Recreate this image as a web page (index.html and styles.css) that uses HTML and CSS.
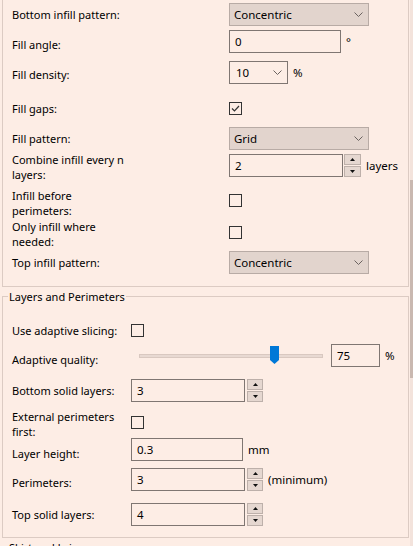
FILE: index.html
```html
<!DOCTYPE html>
<html lang="en">
<head>
  <meta charset="UTF-8" />
  <title>Print Settings</title>
  <link rel="stylesheet" href="styles.css">
</head>
<body>
  <div class="window">
    <div class="panel">

      <fieldset class="group cut">
        <div class="grid infill">
          <div class="lbl">Bottom infill pattern:</div>
          <div class="ctl">
            <div class="combo wide"><span>Concentric</span><svg class="chev" width="9" height="5" viewBox="0 0 9 5"><polyline points="0.5,0.5 4.5,4.5 8.5,0.5" /></svg></div>
          </div>

          <div class="lbl low">Fill angle:</div>
          <div class="ctl">
            <div class="field w112">0</div><span class="unit">°</span>
          </div>

          <div class="lbl low">Fill density:</div>
          <div class="ctl">
            <div class="combo small"><span>10</span><svg class="chev" width="9" height="5" viewBox="0 0 9 5"><polyline points="0.5,0.5 4.5,4.5 8.5,0.5" /></svg></div><span class="unit">%</span>
          </div>

          <div class="lbl">Fill gaps:</div>
          <div class="ctl">
            <div class="check"><svg width="11" height="11" viewBox="0 0 11 11"><polyline points="2,5.5 4.5,8 9,3" /></svg></div>
          </div>

          <div class="lbl">Fill pattern:</div>
          <div class="ctl">
            <div class="combo wide"><span>Grid</span><svg class="chev" width="9" height="5" viewBox="0 0 9 5"><polyline points="0.5,0.5 4.5,4.5 8.5,0.5" /></svg></div>
          </div>

          <div class="lbl two">Combine infill every n<br>layers:</div>
          <div class="ctl">
            <div class="field w114">2</div>
            <div class="spin tight">
              <div class="arrow"><svg width="5" height="3" viewBox="0 0 5 3"><polygon points="0,3 2.5,0 5,3" /></svg></div>
              <div class="arrow"><svg width="5" height="3" viewBox="0 0 5 3"><polygon points="0,0 5,0 2.5,3" /></svg></div>
            </div>
            <span class="unit">layers</span>
          </div>

          <div class="lbl two">Infill before<br>perimeters:</div>
          <div class="ctl"><div class="check"></div></div>

          <div class="lbl two">Only infill where<br>needed:</div>
          <div class="ctl"><div class="check"></div></div>

          <div class="lbl">Top infill pattern:</div>
          <div class="ctl">
            <div class="combo wide"><span>Concentric</span><svg class="chev" width="9" height="5" viewBox="0 0 9 5"><polyline points="0.5,0.5 4.5,4.5 8.5,0.5" /></svg></div>
          </div>
        </div>
      </fieldset>

      <fieldset class="group">
        <legend>Layers and Perimeters</legend>
        <div class="grid layers">
          <div class="lbl">Use adaptive slicing:</div>
          <div class="ctl"><div class="check"></div></div>

          <div class="lbl lower">Adaptive quality:</div>
          <div class="ctl">
            <div class="slider">
              <div class="track"></div>
              <svg class="knob" width="9" height="18" viewBox="0 0 9 18"><polygon points="0,0 9,0 9,14 4.5,18 0,14" /></svg>
            </div>
            <div class="field w49">75</div><span class="unit">%</span>
          </div>

          <div class="lbl">Bottom solid layers:</div>
          <div class="ctl">
            <div class="field w114">3</div>
            <div class="spin">
              <div class="arrow"><svg width="5" height="3" viewBox="0 0 5 3"><polygon points="0,3 2.5,0 5,3" /></svg></div>
              <div class="arrow"><svg width="5" height="3" viewBox="0 0 5 3"><polygon points="0,0 5,0 2.5,3" /></svg></div>
            </div>
          </div>

          <div class="lbl two">External perimeters<br>first:</div>
          <div class="ctl"><div class="check"></div></div>

          <div class="lbl lower">Layer height:</div>
          <div class="ctl">
            <div class="field w112">0.3</div><span class="unit">mm</span>
          </div>

          <div class="lbl low">Perimeters:</div>
          <div class="ctl">
            <div class="field w114">3</div>
            <div class="spin">
              <div class="arrow"><svg width="5" height="3" viewBox="0 0 5 3"><polygon points="0,3 2.5,0 5,3" /></svg></div>
              <div class="arrow"><svg width="5" height="3" viewBox="0 0 5 3"><polygon points="0,0 5,0 2.5,3" /></svg></div>
            </div>
            <span class="unit">(minimum)</span>
          </div>

          <div class="lbl">Top solid layers:</div>
          <div class="ctl">
            <div class="field w114">4</div>
            <div class="spin">
              <div class="arrow"><svg width="5" height="3" viewBox="0 0 5 3"><polygon points="0,3 2.5,0 5,3" /></svg></div>
              <div class="arrow"><svg width="5" height="3" viewBox="0 0 5 3"><polygon points="0,0 5,0 2.5,3" /></svg></div>
            </div>
          </div>
        </div>
      </fieldset>

      <fieldset class="group">
        <legend>Skirt and brim</legend>
      </fieldset>

    </div>
    <div class="scrollbar"><div class="thumb"></div></div>
  </div>
</body>
</html>
```

FILE: styles.css
```css
html, body {
  margin: 0;
  height: 100%;
  overflow: hidden;
}
body {
  font-family: "Noto Sans", "Open Sans", sans-serif;
  font-size: 11px;
  line-height: 15px;
  color: #000;
  background: #fdede5;
}
.window {
  display: flex;
  height: 546px;
}
.panel {
  width: 410px;
}
.scrollbar {
  width: 3px;
  background: #f3e3dc;
}
.thumb {
  margin-top: 180px;
  height: 198px;
  background: #c9b8b0;
}

/* group boxes */
.group {
  margin: 2px 1px 0 2px;
  padding: 13px 0 1px 9px;
  border: 1px solid #dccbc3;
  min-width: 0;
}
.group.cut {
  margin-top: 0;
  padding-top: 0;
  padding-bottom: 5px;
  border-top: none;
}
.group legend {
  margin-left: -4px;
  padding: 0 1px;
}

/* label / control grid */
.grid {
  display: grid;
}
.grid.infill {
  grid-template-columns: 217px 1fr;
  grid-template-rows: 29px 25px 36px 36px 24px 30px 41px 22px 38px;
}
.grid.layers {
  grid-template-columns: 119px 1fr;
  grid-template-rows: 26px 25px 44px 20px 34px 27px 43px;
}
.lbl {
  align-self: center;
  white-space: nowrap;
}
.lbl.low {
  padding-top: 5px;
}
.lbl.lower {
  padding-top: 8px;
}
.lbl.two {
  padding-top: 4px;
}
.ctl {
  display: flex;
  align-items: center;
}
.unit {
  margin-left: 5px;
  font-size: 11.5px;
}

/* controls */
.field {
  box-sizing: border-box;
  height: 23px;
  padding: 3px 5px;
  border: 1px solid #7f7672;
  background: #fdede5;
  font-size: 11.5px;
}
.w112 { width: 112px; }
.w114 { width: 114px; }
.w49 { width: 49px; margin-left: 8px; }

.combo {
  box-sizing: border-box;
  height: 23px;
  display: flex;
  align-items: center;
  justify-content: space-between;
  padding: 0 5px 0 4px;
  border: 1px solid #b8aba5;
  background: #e2d4cd;
  font-size: 11.5px;
}
.combo.wide { width: 140px; }
.combo.small {
  width: 59px;
  padding-left: 6px;
  background: #fdede5;
  border-color: #7f7672;
}
.chev polyline {
  fill: none;
  stroke: #6b6360;
  stroke-width: 1;
}

.check {
  box-sizing: border-box;
  width: 13px;
  height: 13px;
  border: 1px solid #333;
  display: flex;
  align-items: center;
  justify-content: center;
}
.check polyline {
  fill: none;
  stroke: #333;
  stroke-width: 1.2;
}

.spin {
  display: flex;
  flex-direction: column;
  gap: 1px;
  width: 16px;
  margin-left: 2px;
}
.spin.tight {
  width: 17px;
  margin-left: 1px;
}
.arrow {
  box-sizing: border-box;
  height: 11px;
  border: 1px solid #bdb0aa;
  background: #e5d7d0;
  display: flex;
  align-items: center;
  justify-content: center;
}
.arrow polygon {
  fill: #111;
}

.slider {
  position: relative;
  width: 184px;
  height: 20px;
  margin-left: 8px;
  display: flex;
  align-items: center;
}
.track {
  box-sizing: border-box;
  width: 100%;
  height: 4px;
  border: 1px solid #d9c8c0;
  background: #e8d9d2;
}
.knob {
  position: absolute;
  left: 131px;
  top: 0;
}
.knob polygon {
  fill: #0078d7;
}
```
